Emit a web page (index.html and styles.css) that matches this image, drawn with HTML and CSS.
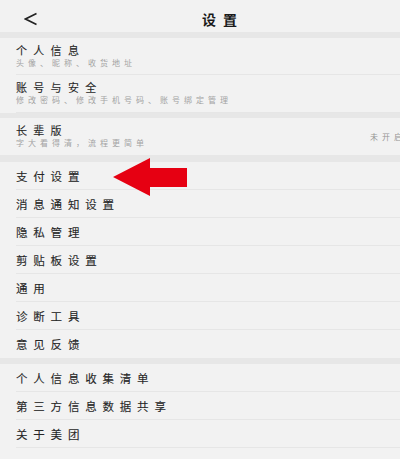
FILE: index.html
```html
<!DOCTYPE html>
<html lang="zh">
<head>
<meta charset="utf-8">
<title>设置</title>
<link rel="stylesheet" href="styles.css">
</head>
<body>
<div class="page">
  <header class="topbar">
    <svg class="back" width="14" height="14" viewBox="0 0 14 14"><path d="M12.5 1.5 L1.5 7 L12.5 12.5" fill="none" stroke="#222" stroke-width="1.6" stroke-linejoin="miter"/></svg>
    <h1 class="title">设置</h1>
  </header>

  <section class="group first">
    <div class="row tall"><div class="txt"><div class="name">个人信息</div><div class="sub">头像、昵称、收货地址</div></div></div>
    <div class="row tall tall2"><div class="txt"><div class="name">账号与安全</div><div class="sub">修改密码、修改手机号码、账号绑定管理</div></div></div>
  </section>

  <section class="group g2">
    <div class="row tall nodiv"><div class="txt"><div class="name">长辈版</div><div class="sub">字大看得清，流程更简单</div></div><span class="val">未开启</span></div>
  </section>

  <section class="group g3">
    <div class="row"><div class="name">支付设置</div></div>
    <div class="row"><div class="name">消息通知设置</div></div>
    <div class="row"><div class="name">隐私管理</div></div>
    <div class="row"><div class="name">剪贴板设置</div></div>
    <div class="row"><div class="name">通用</div></div>
    <div class="row"><div class="name">诊断工具</div></div>
    <div class="row nodiv"><div class="name">意见反馈</div></div>
  </section>

  <section class="group g4">
    <div class="row"><div class="name">个人信息收集清单</div></div>
    <div class="row"><div class="name">第三方信息数据共享</div></div>
    <div class="row"><div class="name">关于美团</div></div>
  </section>

  <svg class="pointer" width="76" height="40" viewBox="0 0 76 40"><polygon points="0,19 37,0 37,10 74,10 74,29 37,29 37,38" fill="#e60012"/></svg>
</div>
</body>
</html>
```

FILE: styles.css
```css
* { box-sizing: border-box; margin: 0; padding: 0; }
html, body { width: 400px; height: 459px; overflow: hidden; }
body {
  background: #f2f2f2;
  font-family: "Noto Sans CJK SC", "Noto Sans", sans-serif;
  color: #2a2a2a;
}
.page { position: relative; width: 400px; height: 459px; overflow: hidden; }
.topbar {
  height: 32px;
  display: flex;
  align-items: center;
  padding-left: 24px;
  padding-top: 5px;
  position: relative;
}
.back { display: block; }
.title {
  position: absolute;
  left: 202px;
  top: 9px;
  font-size: 14px;
  line-height: 20px;
  font-weight: 700;
  letter-spacing: 7px;
  color: #1a1a1a;
}
.group { background: #f2f2f2; }
.first { border-top: 6px solid #e7e7e7; }
.g2 { border-top: 5px solid #e7e7e7; }
.g3 { border-top: 7px solid #e7e7e7; }
.g4 { border-top: 6px solid #e7e7e7; }
.row {
  height: 28px;
  margin-left: 16px;
  border-bottom: 1px solid #e6e6e6;
  display: flex;
  align-items: center;
  justify-content: space-between;
}
.row.tall { height: 37px; }
.row.tall2 { height: 38px; }
.row.nodiv { border-bottom: none; }
.txt { display: flex; flex-direction: column; }
.name {
  font-size: 11.5px;
  line-height: 14px;
  letter-spacing: 5.8px;
  color: #262626;
  -webkit-text-stroke: 0.1px #262626;
  white-space: nowrap;
}
.txt .name {
  font-size: 11px;
  line-height: 13px;
  letter-spacing: 6.3px;
}
.sub {
  font-size: 8px;
  line-height: 12px;
  letter-spacing: 4px;
  color: #a3a3a3;
  white-space: nowrap;
}
.val {
  font-size: 8px;
  letter-spacing: 4px;
  color: #959595;
  margin-right: -6px;
  white-space: nowrap;
}
.pointer {
  position: absolute;
  left: 113px;
  top: 158px;
}
```
